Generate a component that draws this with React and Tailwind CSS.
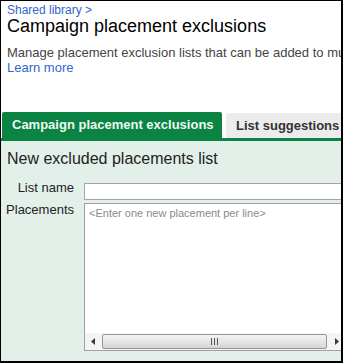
import React from "react";

export default function App() {
  return (
    <div
      className="w-[343px] h-[363px] overflow-hidden bg-white border-black border-l border-t border-r-2 border-b-2 flex flex-col"
      style={{ fontFamily: '"Liberation Sans", Arial, sans-serif' }}
    >
      <div className="pl-[6px] pt-[3px]">
        <div className="text-[12px] leading-[13px] text-[#3366cc]">Shared library &gt;</div>
        <div className="text-[18px] leading-[18px] text-black whitespace-nowrap">Campaign placement exclusions</div>
        <div className="mt-[10px] text-[13px] leading-[15px] text-[#444] whitespace-nowrap overflow-hidden">
          Manage placement exclusion lists that can be added to multiple campaigns.
        </div>
        <div className="text-[13px] leading-[15px] text-[#3366cc]">Learn more</div>
      </div>

      <div className="mt-[37px] flex items-end pl-[1px] whitespace-nowrap">
        <div className="w-[220px] shrink-0 h-[26px] bg-[#0a8343] rounded-t-[2px] pl-[10px] flex items-center text-[13px] font-bold text-[#eef8f3]">
          Campaign placement exclusions
        </div>
        <div className="ml-[4px] h-[25px] flex-1 bg-[#ececec] rounded-tl-[2px] pl-[10px] flex items-center text-[13px] font-bold text-[#333]">
          List suggestions
        </div>
      </div>
      <div className="h-[3px] bg-[#0a8343]" />

      <div className="flex-1 bg-[#e3f0ea] pt-[9px]">
        <div className="pl-[6px] text-[16px] leading-[18px] text-[#222] whitespace-nowrap">New excluded placements list</div>

        <div className="mt-[12px] flex items-start">
          <div className="w-[73px] shrink-0 text-right text-[13px] leading-[15px] text-[#222] whitespace-nowrap">List name</div>
          <div className="ml-[10px] mt-[3px] h-[17px] w-[300px] shrink-0 bg-white border border-[#a5a5a5]" />
        </div>

        <div className="mt-[2px] flex items-start">
          <div className="w-[73px] shrink-0 text-right text-[13px] leading-[15px] text-[#222] whitespace-nowrap">Placements</div>
          <div className="ml-[10px] mt-[1px] h-[148px] w-[300px] shrink-0 bg-white border border-[#a0a0a0] flex flex-col">
            <div className="flex-1 pl-[4px] pt-[3px] text-[11px] leading-[13px] text-[#8a8a8a] whitespace-nowrap">
              &lt;Enter one new placement per line&gt;
            </div>
            <div className="h-[17px] bg-[#f4f4f4] flex items-center">
              <div className="w-[17px] h-[17px] shrink-0 flex items-center justify-center">
                <svg width="5" height="7" viewBox="0 0 5 7">
                  <path d="M4 0 L0 3.5 L4 7 Z" fill="#3a3a3a" />
                </svg>
              </div>
              <div className="w-[225px] shrink-0 h-[15px] rounded-[2px] border border-[#979797] bg-gradient-to-b from-[#f3f3f3] via-[#e6e6e6] to-[#d4d4d4] flex items-center justify-center gap-[2px]">
                <div className="w-[1px] h-[7px] bg-[#555]" />
                <div className="w-[1px] h-[7px] bg-[#555]" />
                <div className="w-[1px] h-[7px] bg-[#555]" />
              </div>
              <div className="w-[17px] h-[17px] shrink-0 flex items-center justify-center ml-[1px]">
                <svg width="5" height="7" viewBox="0 0 5 7">
                  <path d="M1 0 L5 3.5 L1 7 Z" fill="#3a3a3a" />
                </svg>
              </div>
            </div>
          </div>
        </div>
      </div>
    </div>
  );
}
